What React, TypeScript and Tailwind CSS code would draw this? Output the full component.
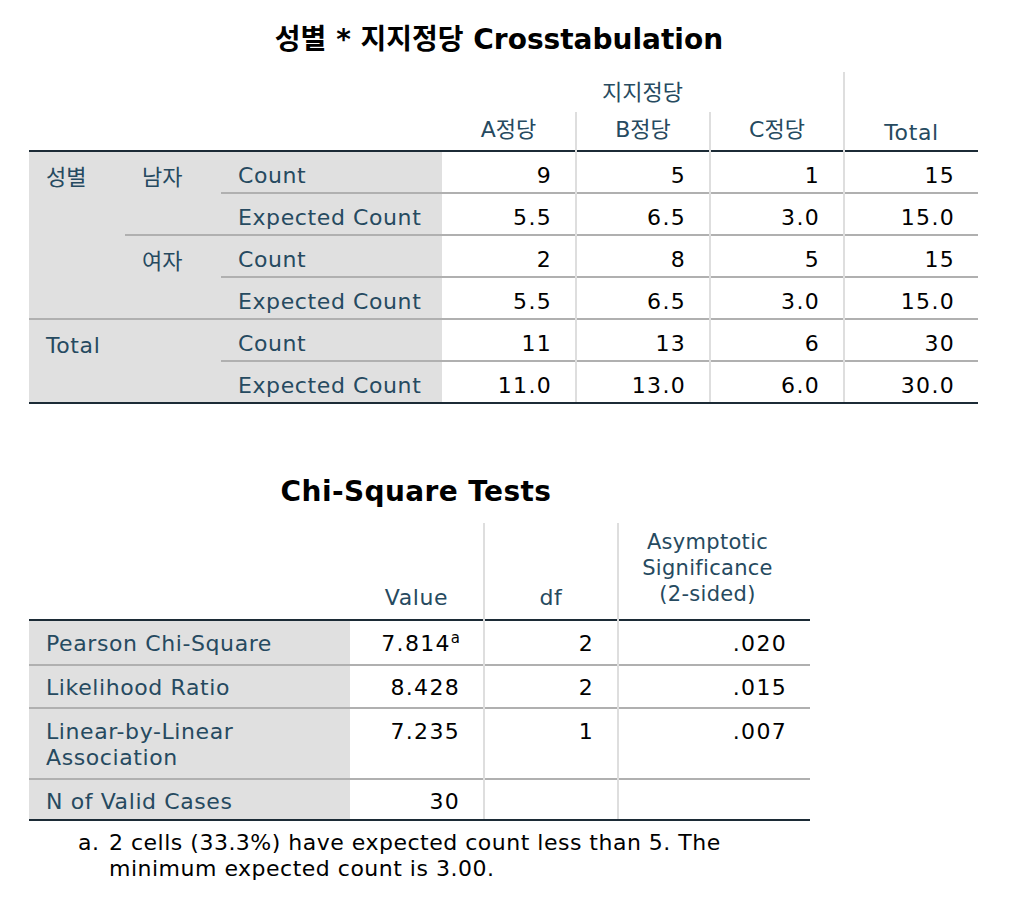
const FONT = "font-['DejaVu_Sans','Noto_Sans_CJK_KR',sans-serif]";

const crossRows = [
  { g1: "성별", g2: "남자", stat: "Count", vals: ["9", "5", "1", "15"] },
  { stat: "Expected Count", vals: ["5.5", "6.5", "3.0", "15.0"] },
  { g2: "여자", stat: "Count", vals: ["2", "8", "5", "15"] },
  { stat: "Expected Count", vals: ["5.5", "6.5", "3.0", "15.0"] },
  { g1: "Total", stat: "Count", vals: ["11", "13", "6", "30"] },
  { stat: "Expected Count", vals: ["11.0", "13.0", "6.0", "30.0"] },
];

const Crosstab = () => {
  return (
    <div className="w-[949px]">
      <div className="h-[40px] pr-[9px] text-center text-[28px] font-bold leading-[40px] text-black">
        성별 * 지지정당 Crosstabulation
      </div>

      <table className="mt-[12px] table-fixed border-collapse text-[22px] tracking-[0.6px]">
        <colgroup>
          <col className="w-[96px]" />
          <col className="w-[96px]" />
          <col className="w-[221px]" />
          <col className="w-[134px]" />
          <col className="w-[134px]" />
          <col className="w-[134px]" />
          <col className="w-[134px]" />
        </colgroup>
        <thead>
          <tr className="h-[40px]">
            <th colSpan={3} />
            <th colSpan={3} className="text-center text-[22px] font-normal tracking-normal text-[#264a60]">
              지지정당
            </th>
            <th
              rowSpan={2}
              className="border-l-2 border-l-[#dedede] pb-[1px] align-bottom text-[22px] font-normal text-[#264a60]"
            >
              Total
            </th>
          </tr>
          <tr className="h-[39px]">
            <th colSpan={3} />
            <th className="pb-[4px] align-bottom text-[22px] font-normal tracking-normal text-[#264a60]">A정당</th>
            <th className="border-l-2 border-l-[#dedede] pb-[4px] align-bottom text-[22px] font-normal tracking-normal text-[#264a60]">
              B정당
            </th>
            <th className="border-l-2 border-l-[#dedede] pb-[4px] align-bottom text-[22px] font-normal tracking-normal text-[#264a60]">
              C정당
            </th>
          </tr>
        </thead>
        <tbody>
          {crossRows.map((row, i) => {
            const first = i === 0;
            const last = i === crossRows.length - 1;
            const top = first ? "border-t-2 border-t-[#1c2b36]" : "border-t-2 border-t-[#b0b0b0]";
            const bottom = last ? "border-b-2 border-b-[#1c2b36]" : "";
            return (
              <tr key={i} className="h-[42px]">
                {row.g1 === "성별" && (
                  <td
                    rowSpan={4}
                    className={`${top} bg-[#e0e0e0] pl-[17px] pt-[9px] align-top text-[22px] tracking-normal text-[#264a60]`}
                  >
                    {row.g1}
                  </td>
                )}
                {row.g1 === "Total" && (
                  <td
                    rowSpan={2}
                    colSpan={2}
                    className="border-t-2 border-t-[#b0b0b0] border-b-2 border-b-[#1c2b36] bg-[#e0e0e0] pl-[17px] pt-[9px] align-top text-[#264a60]"
                  >
                    {row.g1}
                  </td>
                )}
                {row.g2 && (
                  <td
                    rowSpan={2}
                    className={`${top} bg-[#e0e0e0] pl-[17px] pt-[9px] align-top text-[22px] tracking-normal text-[#264a60]`}
                  >
                    {row.g2}
                  </td>
                )}
                <td className={`${top} ${bottom} bg-[#e0e0e0] pl-[17px] pt-[6px] text-[#264a60]`}>{row.stat}</td>
                {row.vals.map((v, j) => (
                  <td
                    key={j}
                    className={`${top} ${bottom} ${j > 0 ? "border-l-2 border-l-[#dedede]" : ""} pr-[23px] pt-[6px] text-right tracking-[1.3px] text-black`}
                  >
                    {v}
                  </td>
                ))}
              </tr>
            );
          })}
        </tbody>
      </table>
    </div>
  );
};

const ChiSquare = () => {
  const rows = [
    { label: "Pearson Chi-Square", value: "7.814", sup: "a", df: "2", sig: ".020", h: "h-[45px]" },
    { label: "Likelihood Ratio", value: "8.428", df: "2", sig: ".015", h: "h-[43px]" },
    { label: "Linear-by-Linear", label2: "Association", value: "7.235", df: "1", sig: ".007", h: "h-[71px]" },
    { label: "N of Valid Cases", value: "30", df: "", sig: "", h: "h-[41px]" },
  ];

  return (
    <div className="w-[781px]">
      <div className="h-[40px] pr-[7px] text-center text-[28px] font-bold leading-[40px] tracking-[0.4px] text-black">
        Chi-Square Tests
      </div>

      <table className="mt-[11px] table-fixed border-collapse text-[22px] tracking-[0.6px]">
        <colgroup>
          <col className="w-[321px]" />
          <col className="w-[134px]" />
          <col className="w-[134px]" />
          <col className="w-[192px]" />
        </colgroup>
        <thead>
          <tr className="h-[97px]">
            <th />
            <th className="pb-[5px] align-bottom font-normal text-[#264a60]">Value</th>
            <th className="border-l-2 border-l-[#dedede] pb-[5px] align-bottom font-normal text-[#264a60]">df</th>
            <th className="border-l-2 border-l-[#dedede] pb-[12px] pr-[14px] align-bottom text-[21px] font-normal leading-[26px] tracking-[0.3px] text-[#264a60]">
              Asymptotic
              <br />
              Significance
              <br />
              (2-sided)
            </th>
          </tr>
        </thead>
        <tbody>
          {rows.map((r, i) => {
            const top = i === 0 ? "border-t-2 border-t-[#1c2b36]" : "border-t-2 border-t-[#b0b0b0]";
            const bottom = i === rows.length - 1 ? "border-b-2 border-b-[#1c2b36]" : "";
            const valign = r.label2 ? "align-top pt-[10px]" : i === rows.length - 1 ? "align-middle pt-[5px]" : "align-middle pt-[2px]";
            return (
              <tr key={i} className={r.h}>
                <td className={`${top} ${bottom} ${valign} bg-[#e0e0e0] pl-[17px] leading-[26px] text-[#264a60]`}>
                  {r.label}
                  {r.label2 && (
                    <>
                      <br />
                      {r.label2}
                    </>
                  )}
                </td>
                <td className={`${top} ${bottom} ${valign} pr-[23px] text-right leading-[26px] tracking-[1.3px] text-black`}>
                  {r.value}
                  {r.sup && <sup className="text-[15px] tracking-normal">{r.sup}</sup>}
                </td>
                <td className={`${top} ${bottom} ${valign} border-l-2 border-l-[#dedede] pr-[23px] text-right leading-[26px] tracking-[1.3px] text-black`}>
                  {r.df}
                </td>
                <td className={`${top} ${bottom} ${valign} border-l-2 border-l-[#dedede] pr-[23px] text-right leading-[26px] tracking-[1.3px] text-black`}>
                  {r.sig}
                </td>
              </tr>
            );
          })}
        </tbody>
      </table>

      <div className="mt-[9px] flex pl-[49px] text-[22px] leading-[26px] tracking-[0.5px] text-black">
        <span className="w-[31px] shrink-0">a.</span>
        <span>
          2 cells (33.3%) have expected count less than 5. The
          <br />
          minimum expected count is 3.00.
        </span>
      </div>
    </div>
  );
};

export default function App() {
  return (
    <div className={`${FONT} min-h-[912px] w-[1018px] bg-white pl-[29px] pt-[20px]`}>
      <Crosstab />
      <div className="mt-[68px]">
        <ChiSquare />
      </div>
    </div>
  );
}
